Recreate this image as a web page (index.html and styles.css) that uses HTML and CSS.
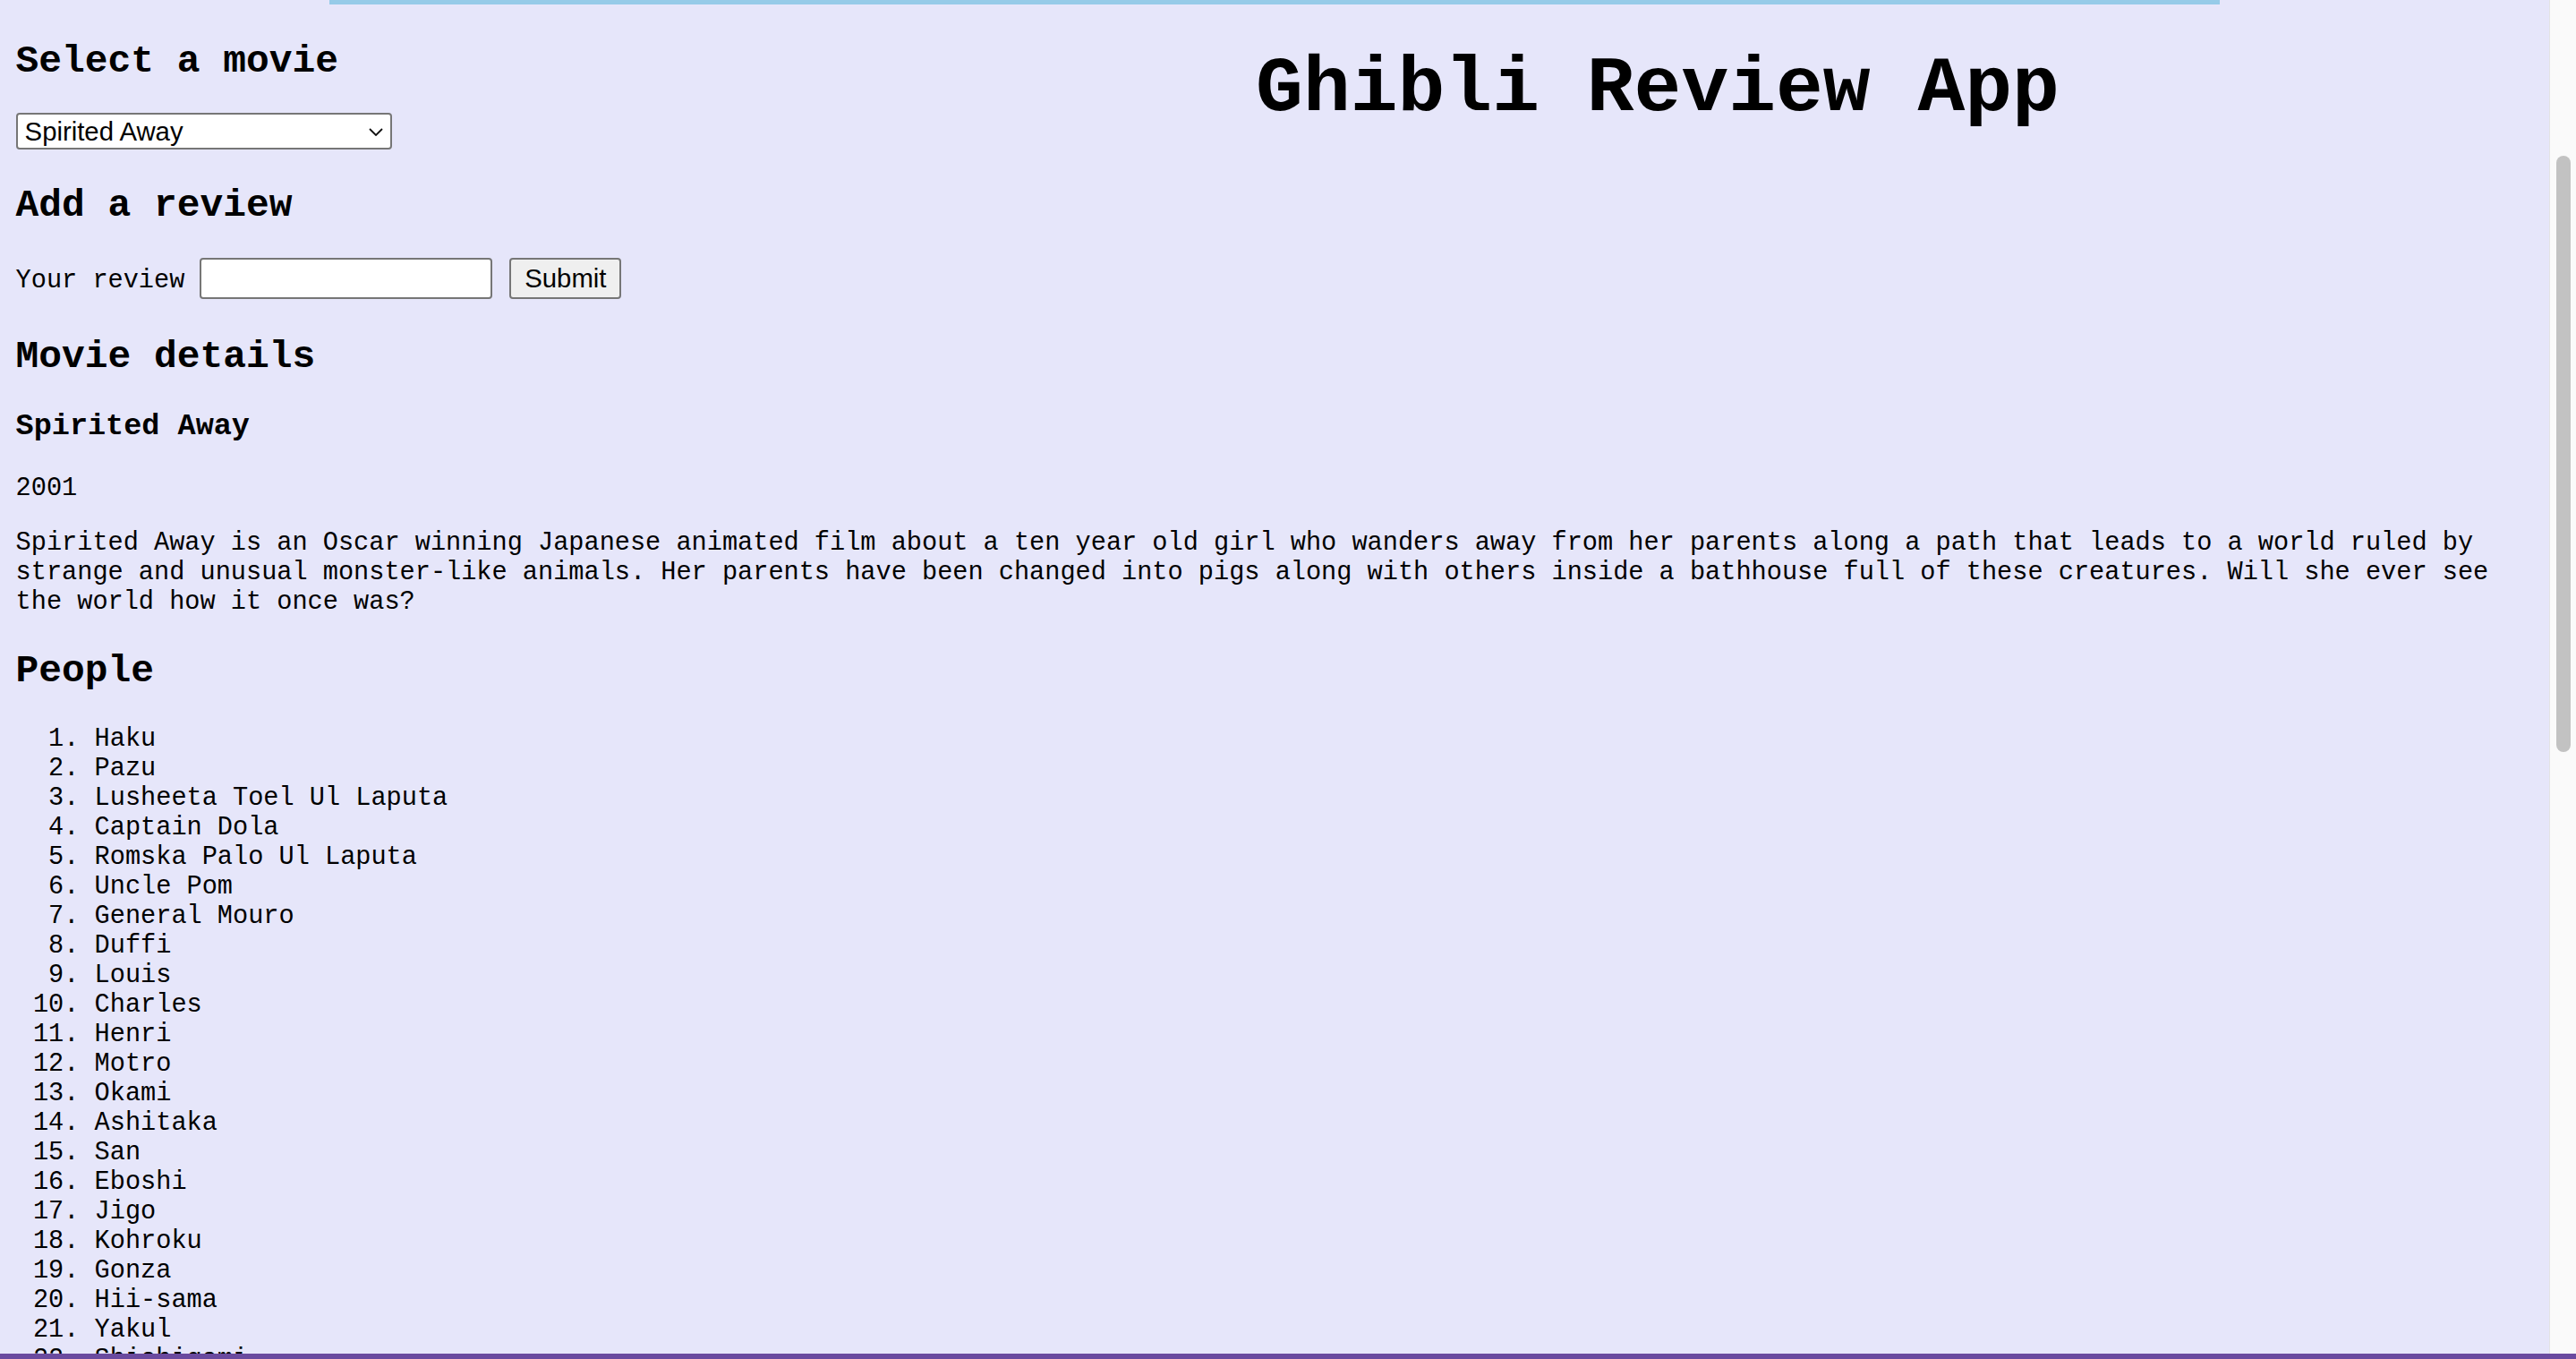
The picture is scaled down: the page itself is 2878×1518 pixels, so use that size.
FILE: index.html
```html
<!DOCTYPE html>
<html lang="en">
<head>
<meta charset="utf-8">
<title>Ghibli Review App</title>
<link rel="stylesheet" href="styles.css">
</head>
<body>
<div class="window">
  <div class="viewport">
    <div class="topbar"></div>
    <div class="page">
      <div class="top">
        <div class="controls">
          <h2 class="first">Select a movie</h2>
          <div class="select-wrap">
            <select class="movie-select" aria-label="Select a movie">
              <option>Spirited Away</option>
              <option>Castle in the Sky</option>
              <option>My Neighbor Totoro</option>
              <option>Princess Mononoke</option>
            </select>
            <svg class="chevron" width="16" height="9" viewBox="0 0 16 9"><path d="M1 1 L8 8 L15 1" fill="none" stroke="#111" stroke-width="1.8"/></svg>
          </div>
          <h2 class="second">Add a review</h2>
          <form class="review-form">
            <label for="review">Your review</label>
            <input id="review" type="text">
            <button type="button">Submit</button>
          </form>
        </div>
        <h1 class="title">Ghibli Review App</h1>
      </div>
      <section class="details">
        <h2>Movie details</h2>
        <h3>Spirited Away</h3>
        <p>2001</p>
        <p>Spirited Away is an Oscar winning Japanese animated film about a ten year old girl who wanders away from her parents along a path that leads to a world ruled by strange and unusual monster-like animals. Her parents have been changed into pigs along with others inside a bathhouse full of these creatures. Will she ever see the world how it once was?</p>
        <h2>People</h2>
        <ol>
          <li>Haku</li>
          <li>Pazu</li>
          <li>Lusheeta Toel Ul Laputa</li>
          <li>Captain Dola</li>
          <li>Romska Palo Ul Laputa</li>
          <li>Uncle Pom</li>
          <li>General Mouro</li>
          <li>Duffi</li>
          <li>Louis</li>
          <li>Charles</li>
          <li>Henri</li>
          <li>Motro</li>
          <li>Okami</li>
          <li>Ashitaka</li>
          <li>San</li>
          <li>Eboshi</li>
          <li>Jigo</li>
          <li>Kohroku</li>
          <li>Gonza</li>
          <li>Hii-sama</li>
          <li>Yakul</li>
          <li>Shishigami</li>
          <li>Moro</li>
          <li>Jiji</li>
        </ol>
      </section>
    </div>
  </div>
  <div class="scrollbar"><div class="thumb"></div></div>
</div>
<div class="bottom-bar"></div>
</body>
</html>
```
FILE: styles.css
```css
html {
  overflow: hidden;
}

body {
  margin: 0;
  height: 1518px;
  display: flex;
  flex-direction: column;
  overflow: hidden;
  background: #e6e6fa;
  color: #000;
  font-family: "Courier New", "Nimbus Mono PS", "Liberation Mono", monospace;
  font-size: 28.6px;
  line-height: 33px;
}

.window {
  flex: 1;
  min-height: 0;
  display: flex;
}

.viewport {
  flex: 1;
  min-width: 0;
  overflow: hidden;
}

.topbar {
  width: 2112px;
  height: 5px;
  margin: 0 auto;
  background: #96cbe8;
}

.page {
  width: 2812.8px;
  padding: 0 17.6px;
}

.top {
  display: grid;
  grid-template-columns: 856px 1fr;
  align-items: start;
}

h2 {
  font-size: 42.9px;
  line-height: 49px;
  font-weight: bold;
  margin: 36px 0 34px;
}

h2.first {
  margin-top: 39px;
  margin-bottom: 33px;
}

h2.second {
  margin-top: 38px;
}

h3 {
  font-size: 33.5px;
  line-height: 38px;
  font-weight: bold;
  margin: 34px 0;
}

p {
  margin: 28px 0;
}

.title {
  margin: 44.5px 0 0;
  font-size: 88px;
  line-height: 100px;
  font-weight: bold;
  text-align: center;
}

.select-wrap {
  position: relative;
  width: 420px;
  height: 41px;
}

.movie-select {
  -webkit-appearance: none;
  appearance: none;
  box-sizing: border-box;
  width: 420px;
  height: 41px;
  margin: 0;
  padding: 0 0 0 8px;
  border: 2px solid #767676;
  border-radius: 4px;
  background: #fff;
  color: #000;
  font-family: "Liberation Sans", Arial, sans-serif;
  font-size: 29.3px;
}

.chevron {
  position: absolute;
  right: 10px;
  top: 17px;
  pointer-events: none;
}

.review-form {
  display: flex;
  align-items: baseline;
  gap: 17px;
  margin: 0 0 4px;
}

.review-form label {
  font-size: 28.6px;
  line-height: 33px;
}

.review-form input {
  box-sizing: border-box;
  width: 327px;
  height: 46px;
  margin: 0;
  padding: 0 6px;
  border: 2px solid #767676;
  border-radius: 4px;
  background: #fff;
  font-family: "Liberation Sans", Arial, sans-serif;
  font-size: 29.3px;
}

.review-form button {
  box-sizing: border-box;
  width: 125px;
  height: 46px;
  margin: 0 0 0 2px;
  padding: 0;
  border: 2px solid #767676;
  border-radius: 4px;
  background: #efefef;
  color: #000;
  font-family: "Liberation Sans", Arial, sans-serif;
  font-size: 29.3px;
}

ol {
  margin: 35px 0 28px;
  padding-left: 88px;
}

li {
  line-height: 33px;
}

.scrollbar {
  box-sizing: border-box;
  flex: 0 0 30px;
  width: 30px;
  background: #fafafa;
  border-left: 1px solid #e4e4e4;
}

.thumb {
  height: 666px;
  margin: 174px 6px 0 7px;
  border-radius: 8px;
  background: #c2c2c2;
}

.bottom-bar {
  flex: 0 0 6px;
  height: 6px;
  background: #6a4a9f;
}
```
